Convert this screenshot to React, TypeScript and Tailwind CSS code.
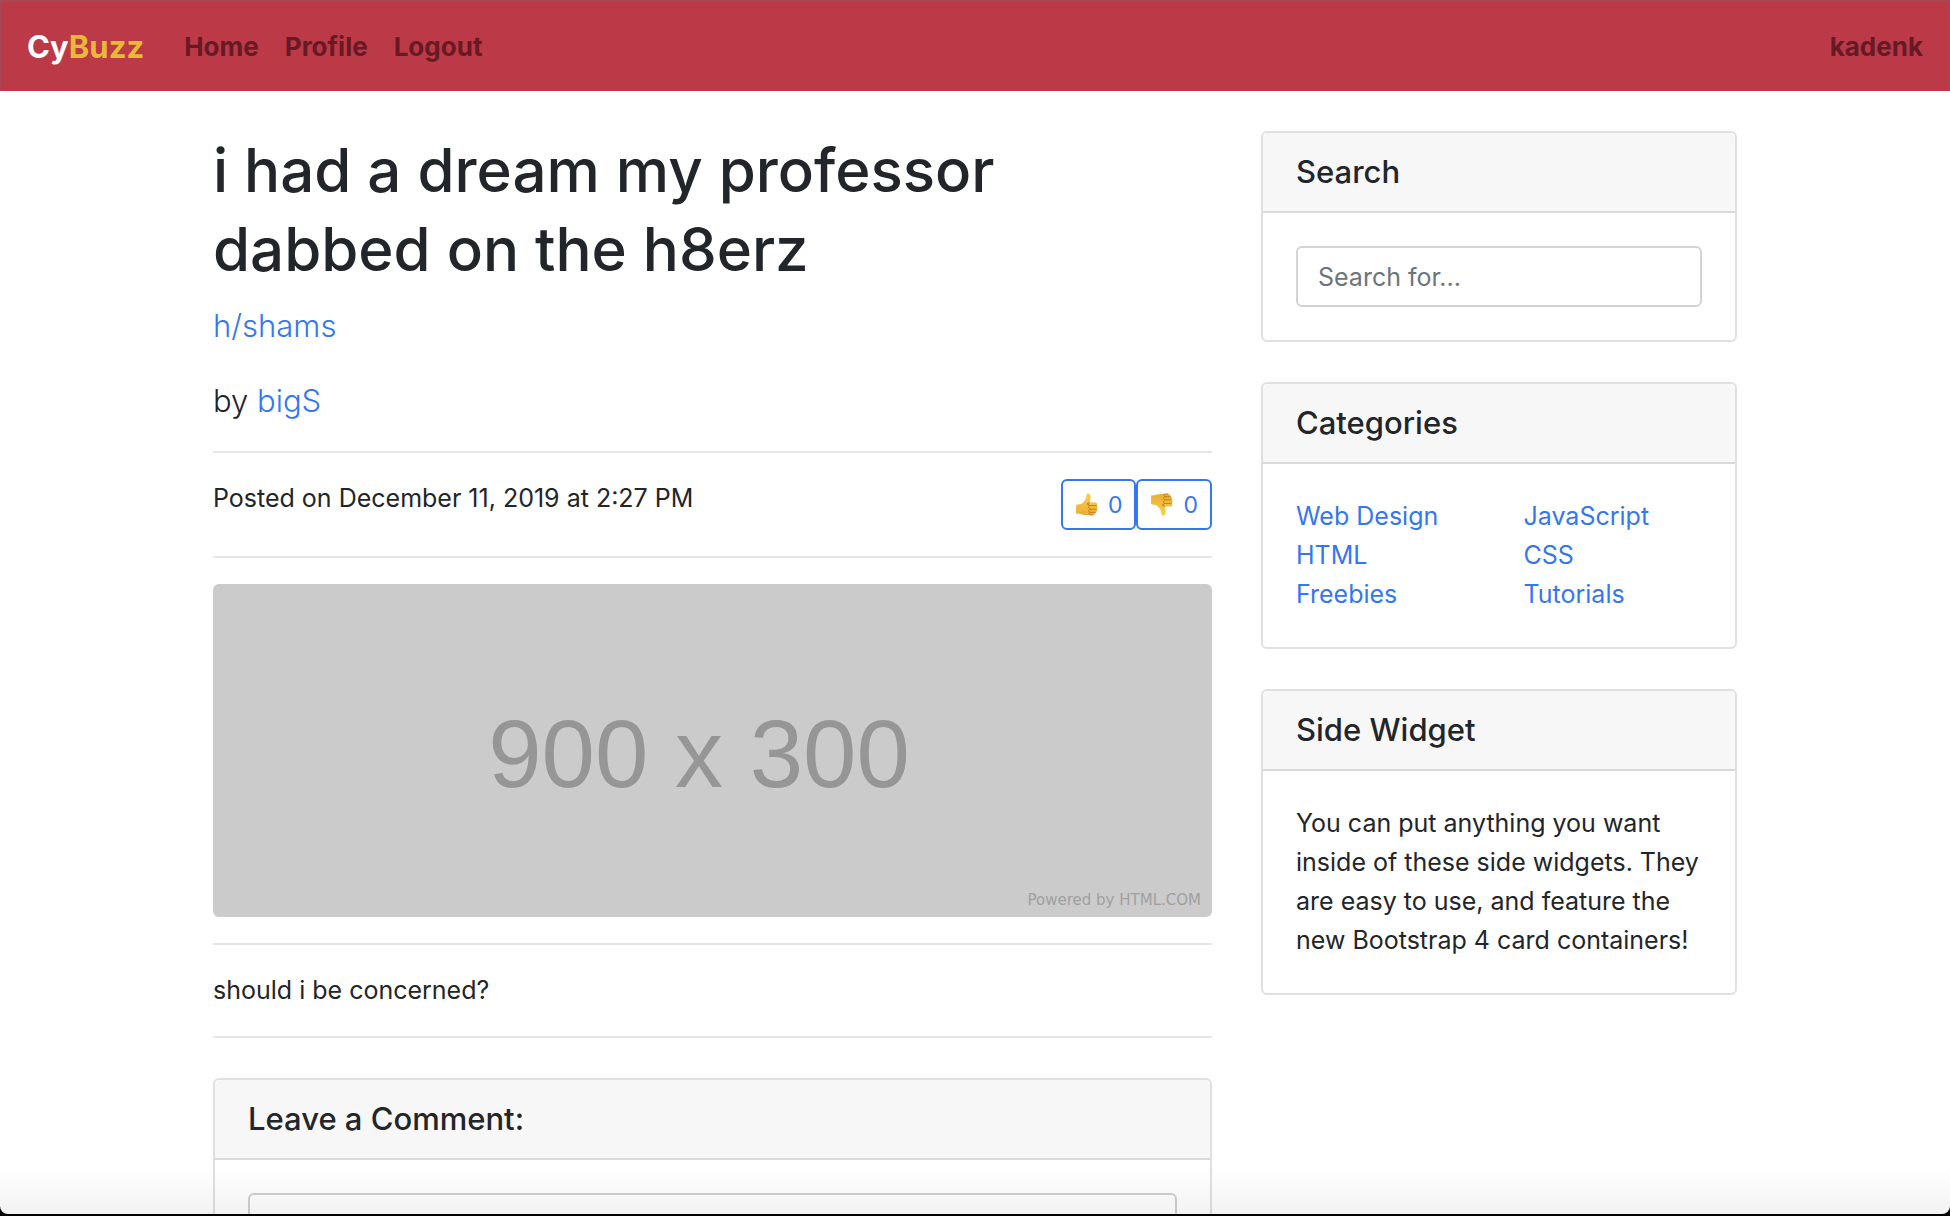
import React from "react";

const categories = [
  ["Web Design", "HTML", "Freebies"],
  ["JavaScript", "CSS", "Tutorials"],
];

function Link({ children, className = "" }: { children: React.ReactNode; className?: string }) {
  return (
    <a href="#" className={`text-[#3577ee] hover:underline ${className}`}>
      {children}
    </a>
  );
}

function Card({ title, children }: { title: React.ReactNode; children: React.ReactNode }) {
  return (
    <section className="rounded-md border-2 border-[#e0e0e0] bg-white">
      <h5 className="rounded-t-md border-b-2 border-[#d9d9d9] bg-[#f7f7f7] px-[33px] py-5 text-[31px] leading-[38px] font-medium">
        {title}
      </h5>
      <div className="p-[33px]">{children}</div>
    </section>
  );
}

function Rule() {
  return <hr className="my-[26px] border-t-2 border-[#e6e6e6]" />;
}

function Thumb({ down = false }: { down?: boolean }) {
  return (
    <svg viewBox="0 0 44 44" className={down ? "size-[23px] rotate-180 -scale-x-100" : "size-[23px]"} aria-hidden="true">
      <defs>
        <linearGradient id={down ? "skinDown" : "skinUp"} x1="0" y1="0" x2="0" y2="1">
          <stop offset="0" stopColor="#fbd04a" />
          <stop offset="1" stopColor="#e9ad35" />
        </linearGradient>
      </defs>
      <path
        d="M2 23c3-2 8-1 11-3 4-3 7-7 8-11 1-3 0-7 3-8 4-1 6 3 6 7 0 4-2 7-2 10h11c4 0 5 5 2 6 3 1 3 6 0 7 2 2 1 6-2 6 1 3-1 5-4 5-7 1-15 1-21-1-4-1-8-2-12-2z"
        fill={down ? "url(#skinDown)" : "url(#skinUp)"}
      />
      <path
        d="M28 18c-3 0-4 3-2 5M41 24H29c-4 0-4 6 0 7h12M29 31c-4 0-4 5 0 6h10M29 37c-3 0-3 4 0 5h5M29 24c-3 0-5-1-5-4"
        fill="none"
        stroke="#b97a1c"
        strokeWidth="1.6"
        strokeLinecap="round"
      />
    </svg>
  );
}

function VoteButton({ down = false, count }: { down?: boolean; count: number }) {
  return (
    <button
      type="button"
      aria-label={down ? "Dislike" : "Like"}
      className="flex h-[51px] items-center gap-2.5 rounded-md border-2 border-[#3577ee] px-3 text-[23px] leading-[34px] text-[#3577ee]"
    >
      <Thumb down={down} />
      <span>{count}</span>
    </button>
  );
}

export default function App() {
  return (
    <div className="h-screen overflow-hidden bg-black">
      <div className="relative h-[calc(100vh-2px)] overflow-hidden rounded-b-lg bg-white font-['Inter','Liberation_Sans',sans-serif] text-[25px] leading-[39px] text-[#222529]">
        <nav className="flex h-[91px] items-center border-x border-t-2 border-[#a34854] bg-[#bc3948] px-[26px] text-[26px] font-bold text-[#671a23]">
          <a href="#" className="mr-10 text-[31px] text-white">
            Cy<span className="text-[#e8b837]">Buzz</span>
          </a>
          <ul className="flex gap-[26px]">
            <li><a href="#">Home</a></li>
            <li><a href="#">Profile</a></li>
            <li><a href="#">Logout</a></li>
          </ul>
          <a href="#" className="ml-auto">kadenk</a>
        </nav>

        <div className="mx-auto mt-10 grid max-w-[1524px] grid-cols-[minmax(0,999fr)_minmax(0,476fr)] items-start gap-[49px]">
          <main>
            <h1 className="mb-3 text-[60px] leading-[79px] font-medium">
              i had a dream my professor dabbed on the h8erz
            </h1>
            <p className="mb-[26px] text-[31px] leading-[49px] font-light">
              <Link>h/shams</Link>
            </p>
            <p className="text-[31px] leading-[49px] font-light">
              by <Link>bigS</Link>
            </p>
            <Rule />
            <div className="flex items-start justify-between">
              <p>Posted on December 11, 2019 at 2:27 PM</p>
              <div className="flex">
                <VoteButton count={0} />
                <VoteButton down count={0} />
              </div>
            </div>
            <Rule />
            <svg viewBox="0 0 999 333" role="img" aria-label="900 x 300 placeholder" className="block w-full rounded-md bg-[#cbcbcb]">
              <text x="486" y="203" textAnchor="middle" fontSize="96" fill="#969696" fontFamily="'Liberation Sans Narrow', 'Liberation Sans', sans-serif">
                900 x 300
              </text>
              <text x="988" y="321" textAnchor="end" fontSize="15" fill="#a0a0a0" fontFamily="'DejaVu Sans', sans-serif">
                Powered by HTML.COM
              </text>
            </svg>
            <Rule />
            <p>should i be concerned?</p>
            <Rule />
            <div className="mt-10">
              <Card title="Leave a Comment:">
                <textarea
                  aria-label="Comment"
                  rows={3}
                  className="block w-full resize-none rounded-md border-2 border-[#ced0d3] bg-white px-5 py-2.5"
                />
              </Card>
            </div>
          </main>

          <aside className="flex flex-col gap-10">
            <Card title={<label htmlFor="search">Search</label>}>
              <input
                id="search"
                type="text"
                placeholder="Search for..."
                className="block h-[61px] w-full rounded-md border-2 border-[#d3d3d3] px-5 placeholder:text-[#6d747b]"
              />
            </Card>
            <Card title="Categories">
              <div className="grid grid-cols-2 gap-[49px]">
                {categories.map((column) => (
                  <ul key={column[0]}>
                    {column.map((name) => (
                      <li key={name}><Link>{name}</Link></li>
                    ))}
                  </ul>
                ))}
              </div>
            </Card>
            <Card title="Side Widget">
              <p>
                You can put anything you want inside of these side widgets. They are easy to use, and feature the new
                Bootstrap 4 card containers!
              </p>
            </Card>
          </aside>
        </div>

        <div className="pointer-events-none absolute inset-x-0 bottom-0 h-12 bg-linear-to-b from-transparent to-black/5" />
      </div>
    </div>
  );
}
